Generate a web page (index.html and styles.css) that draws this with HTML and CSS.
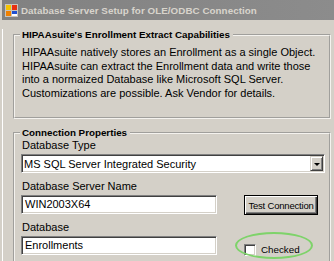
FILE: index.html
```html
<!DOCTYPE html>
<html>
<head>
<meta charset="utf-8">
<link rel="stylesheet" href="styles.css">
</head>
<body>
<div class="window">
  <div class="titlebar">
    <svg class="appicon" width="13" height="13" viewBox="0 0 13 13">
      <rect x="0" y="0" width="13" height="13" fill="#c8c4bc"/>
      <rect x="1" y="1" width="5" height="5" fill="#f5c400"/>
      <rect x="7" y="1" width="5" height="5" fill="#e83010"/>
      <rect x="1" y="7" width="5" height="5" fill="#f08000"/>
      <rect x="7" y="7" width="5" height="3" fill="#2050d0"/>
      <rect x="7" y="10" width="5" height="2" fill="#ffffff"/>
    </svg>
    <span class="title">Database Server Setup for OLE/ODBC Connection</span>
  </div>
  <div class="client">
    <fieldset class="group info">
      <legend>HIPAAsuite's Enrollment Extract Capabilities</legend>
      <p class="desc">HIPAAsuite natively stores an Enrollment as a single Object.<br>HIPAAsuite can extract the Enrollment data and write those<br>into a normaized Database like Microsoft SQL Server.<br>Customizations are possible. Ask Vendor for details.</p>
    </fieldset>
    <fieldset class="group conn">
      <legend>Connection Properties</legend>
      <div class="label">Database Type</div>
      <div class="combo">
        <span class="combo-text">MS SQL Server Integrated Security</span>
        <span class="drop"><span class="tri"></span></span>
      </div>
      <div class="row">
        <div class="col">
          <div class="label">Database Server Name</div>
          <div class="textbox">WIN2003X64</div>
        </div>
        <div class="btn">Test Connection</div>
      </div>
      <div class="row">
        <div class="col">
          <div class="label">Database</div>
          <div class="textbox">Enrollments</div>
        </div>
        <div class="check">
          <span class="box"></span>
          <span class="check-label">Checked</span>
          <span class="ring"></span>
        </div>
      </div>
    </fieldset>
  </div>
</div>
</body>
</html>
```
FILE: styles.css
```css
html, body {
  margin: 0;
  padding: 0;
}
body {
  width: 334px;
  height: 261px;
  overflow: hidden;
  background: #d4d0c8;
  font-family: "Liberation Sans", Arial, sans-serif;
  font-size: 11px;
  color: #000;
}
.window {
  padding-left: 2px;
  height: 261px;
  box-sizing: border-box;
}
.titlebar {
  height: 20px;
  display: flex;
  align-items: center;
  background: linear-gradient(to right, #818181, #8c8c8c);
  padding-left: 3px;
}
.appicon {
  display: block;
  margin-right: 3px;
}
.title {
  color: #d8d4cc;
  font-weight: bold;
  font-size: 9.8px;
  letter-spacing: 0.05px;
}
.client {
  padding: 0 1px 0 10px;
  border-left: 1px solid #fff;
}
.group {
  margin: 0;
  border: 2px groove #f4f2ee;
  padding: 0 6px 0 6px;
  width: 318px;
  box-sizing: border-box;
  min-width: 0;
}
.group legend {
  font-weight: bold;
  font-size: 9.8px;
  line-height: 12px;
  padding: 0 3px 0 2px;
  margin-left: -1px;
}
.info {
  margin-top: 9px;
  height: 90px;
}
.desc {
  margin: 5px 0 0 1px;
  line-height: 13.5px;
}
.conn {
  margin-top: 8px;
  height: 140px;
}
.label {
  line-height: 13px;
  padding-left: 1px;
}
.combo {
  margin-top: 2px;
  width: 304px;
  height: 19px;
  box-sizing: border-box;
  background: #fff;
  border: 1px solid;
  border-color: #808080 #fff #fff #808080;
  box-shadow: inset 1px 1px #404040, inset -1px -1px #d4d0c8;
  display: flex;
  align-items: center;
  padding: 1px 1px 1px 2px;
}
.combo-text {
  flex: 1;
}
.drop {
  width: 13px;
  height: 15px;
  box-sizing: border-box;
  background: #d4d0c8;
  border: 1px solid;
  border-color: #d4d0c8 #404040 #404040 #d4d0c8;
  box-shadow: inset 1px 1px #fff, inset -1px -1px #808080;
  display: flex;
  align-items: center;
  justify-content: center;
}
.tri {
  width: 0;
  height: 0;
  border-left: 3px solid transparent;
  border-right: 3px solid transparent;
  border-top: 3px solid #000;
  margin-top: 1px;
}
.row {
  display: flex;
  align-items: flex-end;
  margin-top: 7px;
}
.col {
  width: 196px;
}
.textbox {
  margin-top: 2px;
  height: 19px;
  box-sizing: border-box;
  background: #fff;
  border: 1px solid;
  border-color: #808080 #fff #fff #808080;
  box-shadow: inset 1px 1px #404040, inset -1px -1px #d4d0c8;
  padding: 0 3px;
  line-height: 17px;
}
.btn {
  margin-left: 27px;
  width: 74px;
  height: 20px;
  box-sizing: border-box;
  border: 1px solid #000;
  background: #d4d0c8;
  box-shadow: inset 1px 1px #fff, inset -1px -1px #404040, inset -2px -2px #808080;
  display: flex;
  align-items: center;
  justify-content: center;
  font-size: 9.5px;
  letter-spacing: -0.2px;
  white-space: nowrap;
  margin-bottom: -1px;
}
.check {
  position: relative;
  margin-left: 27px;
  display: flex;
  align-items: center;
  margin-bottom: -1px;
}
.box {
  width: 12px;
  height: 12px;
  box-sizing: border-box;
  background: #fff;
  border: 1px solid;
  border-color: #808080 #fff #fff #808080;
  box-shadow: inset 1px 1px #404040, inset -1px -1px #d4d0c8;
}
.check-label {
  margin-left: 5px;
  font-size: 9.8px;
  line-height: 13px;
}
.ring {
  position: absolute;
  left: -9px;
  top: -11px;
  width: 78px;
  height: 27px;
  box-sizing: border-box;
  border: 2px solid #7ed36a;
  border-radius: 50%;
}
```
